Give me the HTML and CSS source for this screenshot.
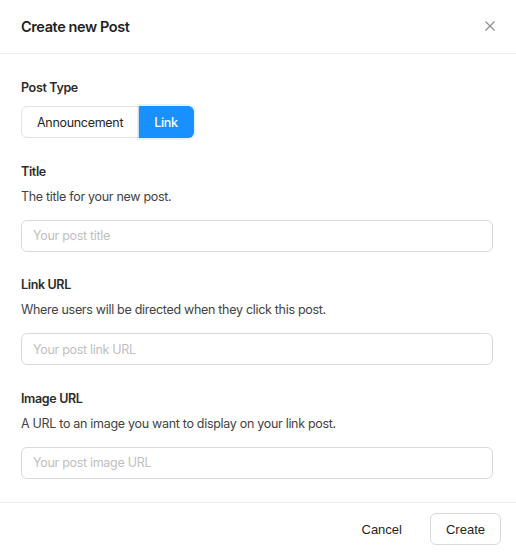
FILE: index.html
```html
<!DOCTYPE html>
<html>
<head>
<meta charset="utf-8">
<link rel="stylesheet" href="styles.css">
</head>
<body>
<div class="modal">
  <div class="modal-header">
    <div class="modal-title">Create new Post</div>
    <button class="close-btn" aria-label="Close">
      <svg width="10" height="10" viewBox="0 0 10 10"><path d="M0.5 0.5 L9.5 9.5 M9.5 0.5 L0.5 9.5" stroke="#8c8c8c" stroke-width="1.2" fill="none"/></svg>
    </button>
  </div>
  <div class="modal-body">
    <div class="field">
      <div class="label">Post Type</div>
      <div class="segmented">
        <button class="seg seg-left">Announcement</button>
        <button class="seg seg-right active">Link</button>
      </div>
    </div>
    <div class="field">
      <div class="label">Title</div>
      <div class="desc">The title for your new post.</div>
      <input class="input" placeholder="Your post title">
    </div>
    <div class="field">
      <div class="label">Link URL</div>
      <div class="desc">Where users will be directed when they click this post.</div>
      <input class="input" placeholder="Your post link URL">
    </div>
    <div class="field">
      <div class="label">Image URL</div>
      <div class="desc">A URL to an image you want to display on your link post.</div>
      <input class="input" placeholder="Your post image URL">
    </div>
  </div>
  <div class="modal-footer">
    <button class="btn btn-text">Cancel</button>
    <button class="btn btn-default">Create</button>
  </div>
</div>
</body>
</html>
```
FILE: styles.css
```css
* { box-sizing: border-box; }
html, body { margin: 0; padding: 0; background: #fff; }
body { font-family: Inter, "Noto Sans", sans-serif; color: #262626; }
.modal { width: 516px; height: 555px; background: #fff; display: flex; flex-direction: column; }
.modal-header {
  height: 54px; border-bottom: 1px solid #ededed;
  display: flex; align-items: center; justify-content: space-between;
  padding: 0 21px 1px 21px;
}
.modal-title { font-size: 14.5px; font-weight: 600; color: #1f1f1f; letter-spacing: -0.4px; }
.close-btn { border: 0; background: none; padding: 0; width: 10px; height: 10px; display: flex; cursor: pointer; }
.modal-body { padding: 24px 23px 0 21px; display: flex; flex-direction: column; gap: 23.5px; flex: 1; }
.field { display: flex; flex-direction: column; }
.label { font-size: 12.5px; font-weight: 600; line-height: 20px; color: #2b2b2b; letter-spacing: -0.35px; }
.desc { font-size: 12.5px; line-height: 20px; color: #434343; margin-top: 5px; letter-spacing: -0.3px; }
.segmented { display: flex; margin-top: 8px; }
.seg {
  font-family: Inter, sans-serif; font-size: 12.5px; height: 32px; padding: 0 15px;
  border: 1px solid #e3e3e3; background: #fff; color: #262626; letter-spacing: -0.3px;
}
.seg-left { border-radius: 6px 0 0 6px; }
.seg-right { border-radius: 0 6px 6px 0; border-left: 0; }
.seg.active { background: #1890ff; border-color: #1890ff; color: #fff; font-weight: 500; box-shadow: 0 0 0 2px rgba(24,144,255,0.12); }
.input {
  margin-top: 13px; height: 32px; width: 472px; border: 1px solid #d9d9d9; border-radius: 6px;
  padding: 0 11px; font-family: Inter, sans-serif; font-size: 12.5px; color: #262626; outline: none;
}
.input::placeholder { color: #bfbfbf; letter-spacing: -0.3px; }
.modal-footer {
  border-top: 1px solid #ededed; height: 53px;
  display: flex; align-items: center; justify-content: flex-end; gap: 9px;
  padding: 0 15px 0 0;
}
.btn { font-family: "Liberation Sans", Arial, sans-serif; font-size: 13px; height: 32px; padding: 0 15px; border-radius: 6px; background: #fff; color: #1f1f1f; cursor: pointer; }
.btn-text { border: 1px solid transparent; margin-right: 3px; }
.btn-default { border: 1px solid #d9d9d9; }
```
